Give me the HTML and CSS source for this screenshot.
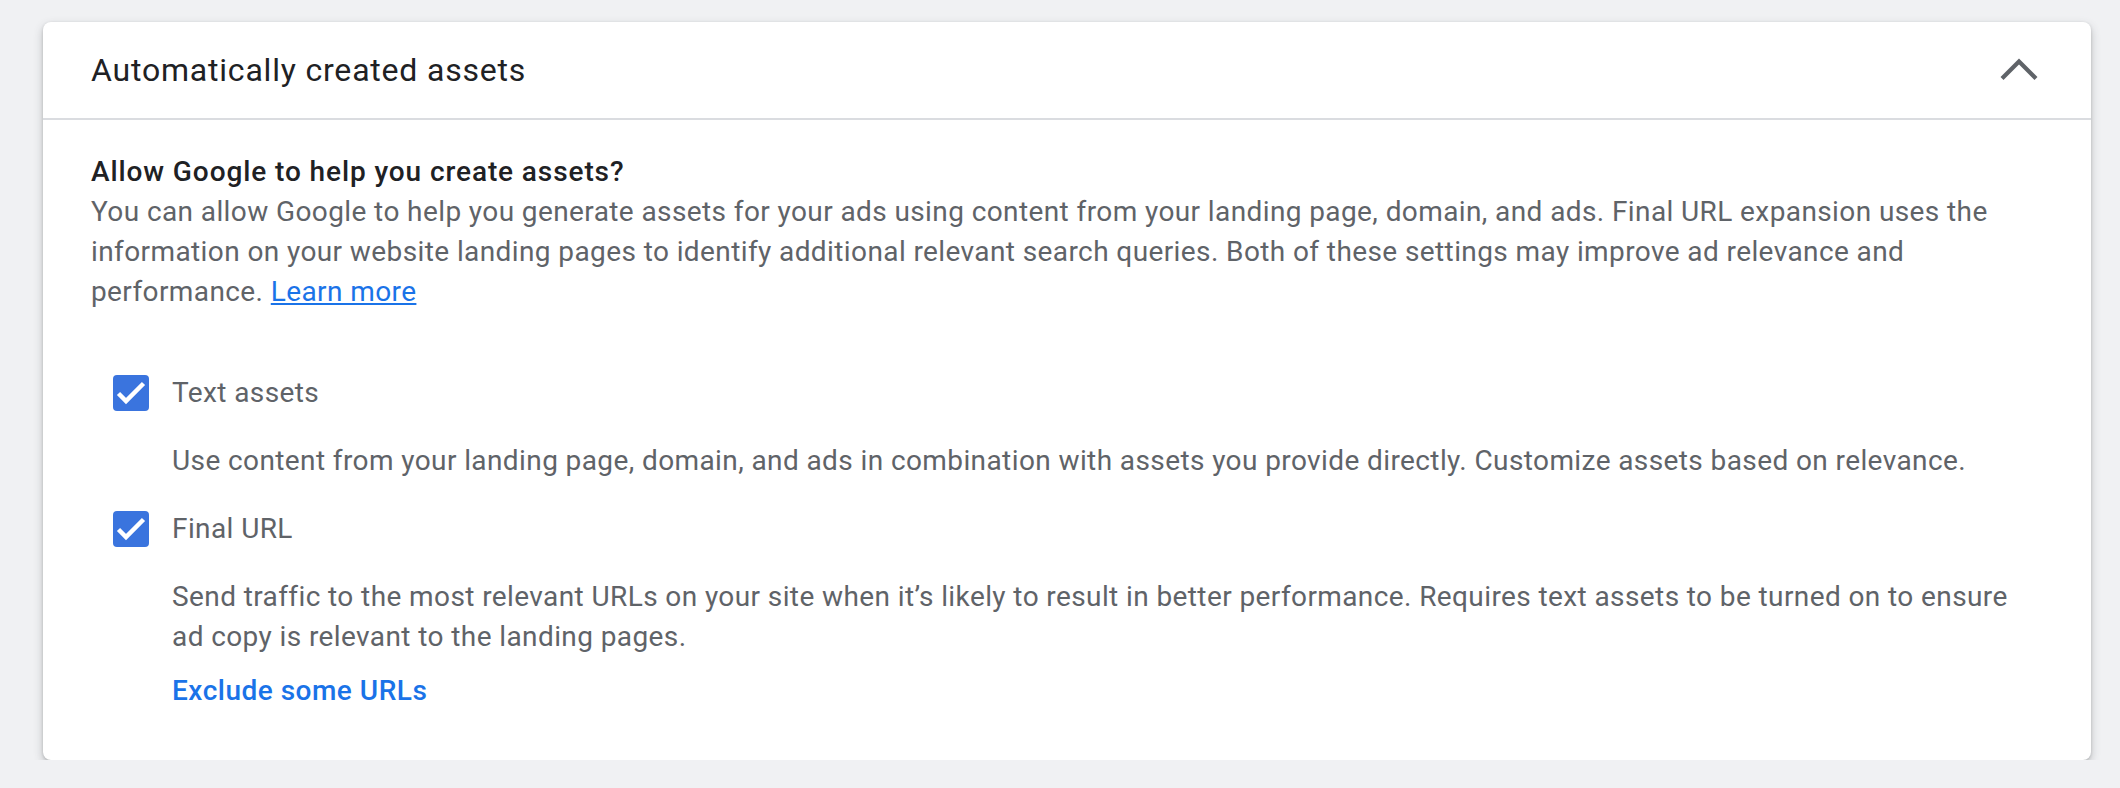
FILE: index.html
```html
<!DOCTYPE html>
<html lang="en">

<head>
    <meta charset="UTF-8">
    <meta name="viewport" content="width=device-width, initial-scale=1.0">
    <title>Automatically created assets</title>
    <link rel="stylesheet" href="styles.css">
</head>

<body>
    <div class="card">
        <div class="card-header">
            <h2 class="card-title">Automatically created assets</h2>
            <span class="toggle">
                <svg width="48" height="48" viewBox="0 0 48 48">
                    <polyline points="13,32 28.5,16.5 44,32" fill="none" stroke="#5f6368" stroke-width="4.2" stroke-linecap="square" transform="translate(-4.5,-1)"></polyline>
                </svg>
            </span>
        </div>
        <div class="card-body">
            <h3 class="question">Allow Google to help you create assets?</h3>
            <p class="intro">You can allow Google to help you generate assets for your ads using content from your landing page, domain, and ads. Final URL expansion uses the information on your website landing pages to identify additional relevant search queries. Both of these settings may improve ad relevance and performance. <a href="#" class="learn">Learn more</a></p>

            <div class="options">
                <label class="option">
                    <span class="box">
                        <svg width="36" height="36" viewBox="0 0 36 36">
                            <polyline points="5.5,18.5 13,26 30.5,8.5" fill="none" stroke="#fff" stroke-width="4.5"></polyline>
                        </svg>
                    </span>
                    <span class="option-label">Text assets</span>
                </label>
                <p class="option-desc">Use content from your landing page, domain, and ads in combination with assets you provide directly. Customize assets based on relevance.</p>

                <label class="option">
                    <span class="box">
                        <svg width="36" height="36" viewBox="0 0 36 36">
                            <polyline points="5.5,18.5 13,26 30.5,8.5" fill="none" stroke="#fff" stroke-width="4.5"></polyline>
                        </svg>
                    </span>
                    <span class="option-label">Final URL</span>
                </label>
                <p class="option-desc">Send traffic to the most relevant URLs on your site when it’s likely to result in better performance. Requires text assets to be turned on to ensure ad copy is relevant to the landing pages.</p>
                <a href="#" class="exclude">Exclude some URLs</a>
            </div>
        </div>
    </div>
</body>

</html>
```

FILE: styles.css
```css
* {
    margin: 0;
    padding: 0;
    box-sizing: border-box;
}

body {
    background: #f0f1f3;
    padding: 22px 29px 0 43px;
    font-family: Roboto, "Liberation Sans", sans-serif;
    color: #5f6368;
}

.card {
    background: #fff;
    border-radius: 8px;
    box-shadow: 0 4px 10px rgba(60, 64, 67, 0.28), 0 1px 3px rgba(60, 64, 67, 0.2);
    height: 738px;
}

.card-header {
    display: flex;
    align-items: center;
    justify-content: space-between;
    height: 98px;
    padding: 0 48px;
    border-bottom: 2px solid #dadce0;
}

.card-title {
    font-size: 32px;
    line-height: 48px;
    font-weight: 400;
    letter-spacing: 0.8px;
    color: #202124;
}

.toggle {
    display: flex;
    width: 48px;
    height: 48px;
}

.card-body {
    padding: 32px 48px 0;
}

.question {
    font-size: 28px;
    line-height: 40px;
    font-weight: 500;
    letter-spacing: 0.9px;
    color: #202124;
}

.intro {
    font-size: 28px;
    line-height: 40px;
    letter-spacing: 0.4px;
}

.learn {
    color: #1a73e8;
}

.options {
    margin-top: 41px;
}

.option {
    display: flex;
    align-items: center;
    height: 80px;
    padding-left: 22px;
}

.box {
    display: flex;
    width: 36px;
    height: 36px;
    background: #3a74de;
    border-radius: 4px;
    margin-right: 23px;
}

.option-label {
    font-size: 28px;
    line-height: 40px;
    letter-spacing: 0.4px;
}

.option-desc {
    font-size: 28px;
    line-height: 40px;
    letter-spacing: 0.4px;
    margin: 8px 0 8px 81px;
}

.exclude {
    display: block;
    margin: 14px 0 0 81px;
    font-size: 28px;
    line-height: 40px;
    font-weight: 500;
    letter-spacing: 0.5px;
    color: #1a73e8;
    text-decoration: none;
}
```
